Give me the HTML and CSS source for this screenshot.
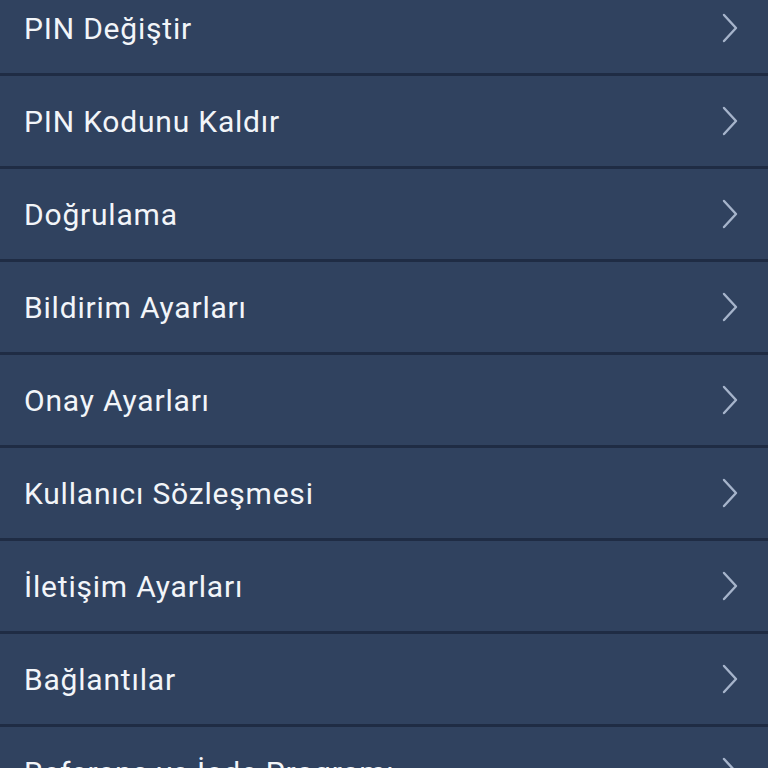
FILE: index.html
```html
<!DOCTYPE html>
<html lang="tr">
<head>
<meta charset="utf-8">
<link rel="stylesheet" href="styles.css">
</head>
<body>
<ul class="menu">
  <li class="item"><span class="label">PIN Değiştir</span><svg class="chev" viewBox="0 0 16 30"><path d="M2 2 L14 15 L2 28"/></svg></li>
  <li class="item"><span class="label">PIN Kodunu Kaldır</span><svg class="chev" viewBox="0 0 16 30"><path d="M2 2 L14 15 L2 28"/></svg></li>
  <li class="item"><span class="label">Doğrulama</span><svg class="chev" viewBox="0 0 16 30"><path d="M2 2 L14 15 L2 28"/></svg></li>
  <li class="item"><span class="label">Bildirim Ayarları</span><svg class="chev" viewBox="0 0 16 30"><path d="M2 2 L14 15 L2 28"/></svg></li>
  <li class="item"><span class="label">Onay Ayarları</span><svg class="chev" viewBox="0 0 16 30"><path d="M2 2 L14 15 L2 28"/></svg></li>
  <li class="item"><span class="label">Kullanıcı Sözleşmesi</span><svg class="chev" viewBox="0 0 16 30"><path d="M2 2 L14 15 L2 28"/></svg></li>
  <li class="item"><span class="label">İletişim Ayarları</span><svg class="chev" viewBox="0 0 16 30"><path d="M2 2 L14 15 L2 28"/></svg></li>
  <li class="item"><span class="label">Bağlantılar</span><svg class="chev" viewBox="0 0 16 30"><path d="M2 2 L14 15 L2 28"/></svg></li>
  <li class="item"><span class="label">Referans ve İade Programı</span><svg class="chev" viewBox="0 0 16 30"><path d="M2 2 L14 15 L2 28"/></svg></li>
</ul>
</body>
</html>
```
FILE: styles.css
```css
html, body {
  margin: 0;
  padding: 0;
  height: 768px;
  overflow: hidden;
  background: #1f2c44;
}
.menu {
  list-style: none;
  margin: -17px 0 0 0;
  padding: 0;
  display: flex;
  flex-direction: column;
  gap: 3px;
}
.item {
  height: 90px;
  background: #30425f;
  display: flex;
  align-items: center;
  justify-content: space-between;
  padding: 0 30px 0 24px;
}
.label {
  font-family: Roboto, "Noto Sans", sans-serif;
  font-size: 30px;
  letter-spacing: 0.8px;
  color: #f2f5f9;
}
.chev {
  width: 16px;
  height: 30px;
  fill: none;
  stroke: #a6b4cb;
  stroke-width: 2.4;
  stroke-linecap: round;
  stroke-linejoin: round;
}
```
